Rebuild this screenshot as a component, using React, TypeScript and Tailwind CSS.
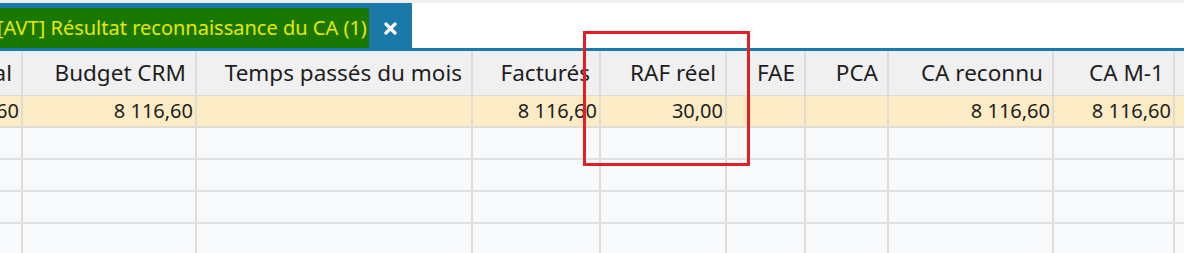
const columns = [
  { label: 'Montant total', width: 120, value: '8 116,60' },
  { label: 'Budget CRM', width: 174, value: '8 116,60' },
  { label: 'Temps passés du mois', width: 276, value: '' },
  { label: 'Facturés', width: 128, value: '8 116,60' },
  { label: 'RAF réel', width: 126, value: '30,00' },
  { label: 'FAE', width: 79, value: '' },
  { label: 'PCA', width: 83, value: '' },
  { label: 'CA reconnu', width: 165, value: '8 116,60' },
  { label: 'CA M-1', width: 121, value: '8 116,60' },
  { label: 'Écart', width: 140, value: '' },
];

const emptyRows = [0, 1, 2, 3];

function CloseIcon() {
  return (
    <svg width="13" height="13" viewBox="0 0 13 13" aria-hidden="true">
      <path d="M2 2 L11 11 M11 2 L2 11" stroke="#ffffff" strokeWidth="3.2" strokeLinecap="round" />
    </svg>
  );
}

export default function App() {
  return (
    <div className="relative w-[1184px] h-[253px] overflow-hidden bg-white font-['Segoe_UI','Noto_Sans',sans-serif] text-[#1e1e1e]">
      <div className="h-[3px] bg-[#f0f0f0]" />

      {/* tab strip */}
      <div className="flex h-[45px]">
        <div className="flex bg-[#1b79a9] pt-[5px] -ml-[8px]">
          <div className="flex items-center bg-[#1a7800] pl-[5px] pr-[2px] pb-[1px] text-[20px] text-[#e6ea00] whitespace-nowrap">
            [AVT] Résultat reconnaissance du CA (1)
          </div>
          <div className="flex w-[43px] items-center justify-center">
            <CloseIcon />
          </div>
        </div>
      </div>
      <div className="h-[3px] bg-[#1b79a9]" />

      {/* grid */}
      <div className="-ml-[97px] flex flex-col">
        <div className="flex h-[45px] bg-[#f0f0f0] border-b border-[#dcdcdc]">
          {columns.map((c) => (
            <div
              key={c.label}
              style={{ width: c.width }}
              className="flex shrink-0 items-center justify-end border-r-2 border-[#dcdcdc] pr-[9px] text-[22.5px] whitespace-nowrap"
            >
              {c.label}
            </div>
          ))}
        </div>
        <div className="flex h-[32px] bg-[#fcecc6] border-b-2 border-[#e2ddd0]">
          {columns.map((c) => (
            <div
              key={c.label}
              style={{ width: c.width }}
              className="flex shrink-0 items-center justify-end border-r-2 border-[#e0dccf] pr-[2px] text-[20px] whitespace-nowrap"
            >
              {c.value}
            </div>
          ))}
        </div>
        {emptyRows.map((r) => (
          <div key={r} className="flex h-[32px] bg-[#f8f9fb] border-b-2 border-[#e0e1e3]">
            {columns.map((c) => (
              <div
                key={c.label}
                style={{ width: c.width }}
                className="shrink-0 border-r-2 border-[#dcdcdc]"
              />
            ))}
          </div>
        ))}
      </div>

      {/* highlight annotation */}
      <div className="absolute left-[583px] top-[31px] h-[135px] w-[167px] border-[3px] border-[#e31e24]" />
    </div>
  );
}
